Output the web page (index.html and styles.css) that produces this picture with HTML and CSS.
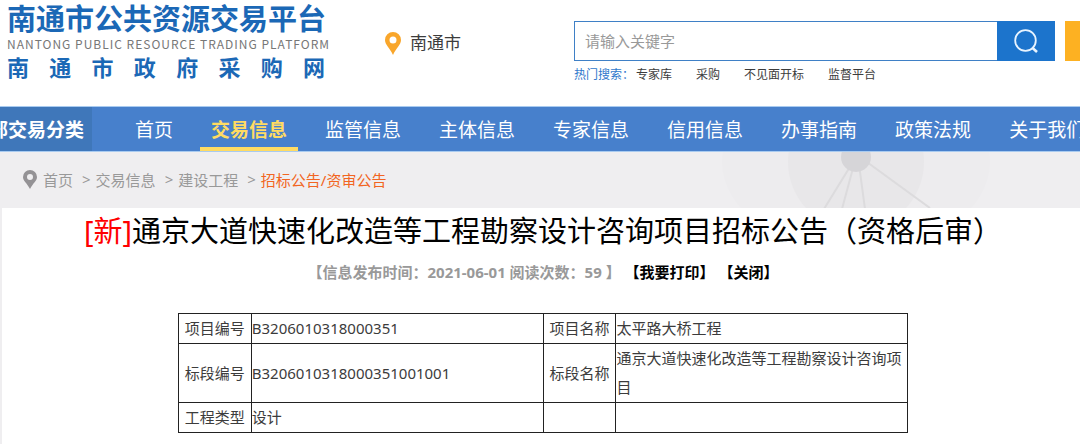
FILE: index.html
```html
<!DOCTYPE html>
<html lang="zh-CN">
<head>
  <meta charset="UTF-8">
  <meta name="viewport" content="width=device-width, initial-scale=1.0">
  <title>南通市公共资源交易平台</title>
  <link rel="stylesheet" href="styles.css">
</head>
<body>
  <!-- Header -->
  <header class="header">
    <a class="logo" href="#">
      <span class="logo-main">南通市公共资源交易平台</span>
      <span class="logo-en">NANTONG PUBLIC RESOURCE TRADING PLATFORM</span>
      <span class="logo-sub">南通市政府采购网</span>
    </a>
    <div class="city">
      <svg class="city-pin" viewBox="0 0 16 23" width="16" height="23">
        <path fill="#f9a62b" fill-rule="evenodd" d="M8 0a8 8 0 0 0-8 8c0 5 5 8 8 15 3-7 8-10 8-15a8 8 0 0 0-8-8zm0 4.500a3.500 3.500 0 1 1 0 7 3.500 3.500 0 0 1 0-7z"/>
      </svg>
      <span>南通市</span>
    </div>
    <div class="search">
      <form class="search-form">
        <input type="text" class="search-input" placeholder="请输入关键字" aria-label="请输入关键字">
        <button type="button" class="search-btn" aria-label="搜索">
          <svg viewBox="0 0 24 24" width="24" height="24" fill="none" stroke="#e8f4ff">
            <circle cx="11.500" cy="11.500" r="10.300" stroke-width="1.800"/>
            <path d="M18 18.500l5 4.500" stroke-width="2.600"/>
          </svg>
        </button>
      </form>
      <div class="hot">
        <span class="hot-label">热门搜索：</span>
        <a href="#">专家库</a>
        <a href="#">采购</a>
        <a href="#">不见面开标</a>
        <a href="#">监督平台</a>
      </div>
    </div>
    <button type="button" class="side-btn" aria-label="高级搜索"></button>
  </header>

  <!-- Navigation -->
  <nav class="nav">
    <a class="nav-all" href="#">全部交易分类</a>
    <ul class="nav-list">
      <li><a href="#">首页</a></li>
      <li><a class="active" href="#">交易信息</a></li>
      <li><a href="#">监管信息</a></li>
      <li><a href="#">主体信息</a></li>
      <li><a href="#">专家信息</a></li>
      <li><a href="#">信用信息</a></li>
      <li><a href="#">办事指南</a></li>
      <li><a href="#">政策法规</a></li>
      <li><a href="#">关于我们</a></li>
    </ul>
  </nav>

  <main class="main">
    <!-- Breadcrumb -->
    <div class="crumbs">
      <svg class="crumbs-bg" viewBox="0 0 280 56" width="280" height="56">
        <ellipse cx="136" cy="10" rx="134" ry="90" fill="#edecee"/>
        <circle cx="136" cy="10" r="68" fill="#e8e7e9"/>
        <g stroke="#dcdbdd" stroke-width="2">
          <path d="M136 5L104 57M136 5L122 57M138 5L145 57M140 5L210 56"/>
        </g>
        <circle cx="136" cy="5" r="15" fill="#d6d5d8"/>
      </svg>
      <svg class="crumbs-pin" viewBox="0 0 14 19" width="14" height="19">
        <path fill="#949295" fill-rule="evenodd" d="M7 0a7 7 0 0 0-7 7c0 4 4 6 7 12 3-6 7-8 7-12a7 7 0 0 0-7-7zm0 4a3 3 0 1 1 0 6 3 3 0 0 1 0-6z"/>
      </svg>
      <a href="#">首页</a>
      <span class="sep">&gt;</span>
      <a href="#">交易信息</a>
      <span class="sep">&gt;</span>
      <a href="#">建设工程</a>
      <span class="sep">&gt;</span>
      <a class="current" href="#">招标公告/资审公告</a>
    </div>

    <!-- Article -->
    <article class="article">
      <h1><span class="new">[新]</span>通京大道快速化改造等工程勘察设计咨询项目招标公告（资格后审）</h1>
      <p class="meta">【信息发布时间：2021-06-01 阅读次数：59 】 <a href="#">【我要打印】</a> <a href="#">【关闭】</a></p>
      <table class="info">
        <tr>
          <th scope="row">项目编号</th>
          <td>B3206010318000351</td>
          <th scope="row">项目名称</th>
          <td>太平路大桥工程</td>
        </tr>
        <tr>
          <th scope="row">标段编号</th>
          <td>B3206010318000351001001</td>
          <th scope="row">标段名称</th>
          <td>通京大道快速化改造等工程勘察设计咨询项目</td>
        </tr>
        <tr>
          <th scope="row">工程类型</th>
          <td>设计</td>
          <td></td>
          <td></td>
        </tr>
      </table>
    </article>
  </main>
</body>
</html>
```
FILE: styles.css
```css
* {
  box-sizing: border-box;
}
body {
  margin: 0;
  font-family: "Noto Sans", "Noto Sans CJK SC", sans-serif;
  font-size: 15px;
  color: #3c3c3c;
  background: #fff;
  overflow-x: hidden;
}
a {
  color: inherit;
  text-decoration: none;
}

/* Header */
.header {
  display: flex;
  align-items: flex-start;
  height: 106px;
}
.logo {
  display: flex;
  flex-direction: column;
  flex: none;
  width: 318px;
  margin: 2px 60px 0 7px;
  color: #1b68b6;
  font-weight: bold;
  white-space: nowrap;
}
.logo-main {
  font-size: 29px;
  line-height: 34px;
}
.logo-en {
  font-family: "Noto Sans CJK SC", sans-serif;
  font-size: 12px;
  font-weight: normal;
  line-height: 16px;
  letter-spacing: 1px;
  color: #777;
}
.logo-sub {
  font-size: 22px;
  line-height: 30px;
  text-align: justify;
  text-align-last: justify;
}
.city {
  display: flex;
  align-items: center;
  flex: none;
  gap: 9px;
  width: 189px;
  margin-top: 30px;
  font-size: 17px;
  line-height: 26px;
}
.search {
  flex: 1;
}
.search-form {
  display: flex;
  height: 40px;
  margin-top: 21px;
}
.search-input {
  flex: 1;
  min-width: 0;
  padding: 0 10px;
  border: 1px solid #3f80c6;
  border-right: none;
  font-family: inherit;
  font-size: 15px;
  outline: none;
}
.search-input::placeholder {
  color: #999;
}
.search-btn {
  display: flex;
  align-items: center;
  justify-content: center;
  width: 58px;
  padding: 0;
  border: none;
  background: #1c74cc;
  cursor: pointer;
}
.hot {
  display: flex;
  gap: 24px;
  margin-top: 4px;
  font-size: 12px;
  line-height: 20px;
  white-space: nowrap;
}
.hot-label {
  margin-right: -22px;
  color: #2f78cc;
}
.side-btn {
  width: 15px;
  height: 40px;
  margin: 21px 0 0 10px;
  padding: 0;
  border: none;
  background: #fdb122;
}

/* Navigation */
.nav {
  display: flex;
  height: 46px;
  border-top: 1px solid #a9cbf0;
  border-bottom: 1px solid #a9cbf0;
  background: #4780cc;
  color: #fff;
  font-size: 19px;
  line-height: 46px;
  white-space: nowrap;
  overflow: hidden;
}
.nav-all {
  display: flex;
  justify-content: flex-end;
  flex: none;
  width: 92px;
  padding-right: 8px;
  background: #3f77ba;
  font-weight: bold;
}
.nav-list {
  display: flex;
  gap: 16px;
  margin: 0;
  padding: 0 0 0 32px;
  list-style: none;
}
.nav-list a {
  display: block;
  height: 44px;
  padding: 0 11px;
}
.nav-list .active {
  border-bottom: 4px solid #ffdb62;
  color: #ffdb62;
  font-weight: bold;
}

/* Breadcrumb */
.main {
  background: #efeef0;
}
.crumbs {
  position: relative;
  display: flex;
  align-items: center;
  height: 56px;
  padding: 0 0 2px 23px;
  color: #999;
}
.crumbs-bg {
  position: absolute;
  top: 0;
  left: 720px;
}
.crumbs-pin {
  margin-right: 6px;
}
.sep {
  margin: 0 5px 0 9px;
}
.current {
  color: #f26522;
}

/* Article */
.article {
  margin-left: 2px;
  padding: 0 0 12px 4px;
  background: #fff;
}
h1 {
  margin: 0;
  color: #000;
  font-size: 29px;
  font-weight: normal;
  line-height: 46px;
  text-align: center;
}
.new {
  color: #f00;
}
.meta {
  margin: 8px 0 31px;
  color: #999;
  font-size: 15px;
  font-weight: bold;
  line-height: 20px;
  text-align: center;
}
.meta a {
  color: #000;
}
.info {
  width: 68%;
  margin: 0 auto;
  border-collapse: collapse;
  table-layout: fixed;
}
.info th,
.info td {
  height: 30px;
  padding: 0;
  border: 1px solid #222;
  font-weight: normal;
  line-height: 29px;
  text-align: left;
}
.info th {
  width: 10%;
  text-align: center;
}
```
